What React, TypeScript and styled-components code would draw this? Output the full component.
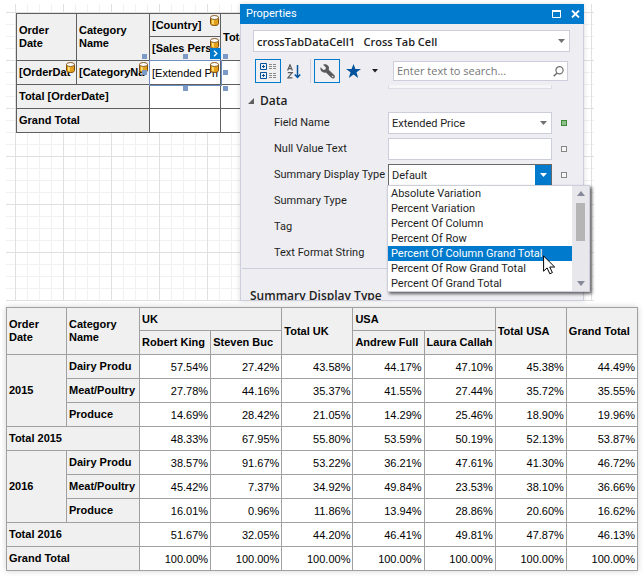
import React from 'react';
import styled, { createGlobalStyle, css } from 'styled-components';

const ui = "Roboto, 'Open Sans', sans-serif";
const uiBold = "'Open Sans', 'Noto Sans', sans-serif";
const report = "'Liberation Sans', Arial, sans-serif";
const blue = '#007acc';
const edge = '#cccedb';

const Global = createGlobalStyle`
  *, *::before, *::after { box-sizing: border-box; }
  body { margin: 0; background: #fff; color: #1e1e1e; font: 11px/13px ${report}; }
  button, input, select { font: inherit; color: inherit; margin: 0; }
`;

const Page = styled.main`
  display: flex;
  flex-direction: column;
  gap: 6px;
  padding: 4px 6px 8px;
`;

const Designer = styled.section`
  display: flex;
  margin-right: 44px;
  padding-right: 10px;
  background-color: #fff;
  background-image:
    linear-gradient(90deg, #e0e0e0 1px, transparent 1px),
    linear-gradient(#e0e0e0 1px, transparent 1px),
    linear-gradient(90deg, #f1f1f1 1px, transparent 1px),
    linear-gradient(#f1f1f1 1px, transparent 1px);
  background-size: 48px 48px, 48px 48px, 12px 12px, 12px 12px;
  background-position: 9px 8px;
`;

const Surface = styled.div`
  flex: 0 0 234px;
  overflow: hidden;
  padding: 9px 0 0 10px;
`;

const Grid = styled.table<{ $line: string }>`
  table-layout: fixed;
  border-collapse: collapse;
  width: 100%;
  color: #000;
  font: 11px/13px ${report};
  background: #fff;
  th, td { border: 1px solid ${p => p.$line}; }
`;

const DesignGrid = styled(Grid)`
  width: 275px;
`;

const Col = styled.col<{ $w?: number }>`
  ${p => p.$w && css`width: ${p.$w}px;`}
`;

const Row = styled.tr<{ $h?: number }>`
  height: ${p => p.$h ?? 24}px;
`;

const Head = styled.th`
  position: relative;
  padding: 0 0 0 2px;
  background: #f0f0f0;
  font-weight: bold;
  text-align: left;
  vertical-align: middle;
  white-space: nowrap;
`;

const Cell = styled.td<{ $left?: boolean }>`
  position: relative;
  padding: 2px 2px 0;
  text-align: ${p => (p.$left ? 'left' : 'right')};
  white-space: nowrap;
`;

const BoundMark = styled.svg`
  position: absolute;
  top: 1px;
  right: 1px;
  width: 9px;
  height: 11px;
`;

const Bound = () => (
  <BoundMark viewBox="0 0 9 11" aria-hidden="true">
    <path d="M.5 2.500v6c0 1.300 1.800 2 4 2s4-.7 4-2v-6z" fill="#e2a01c" stroke="#7c4a0a" />
    <path d="M2 4v4.500c.4.600 1 .8 1.800 1V4z" fill="#ffe07a" />
    <ellipse cx="4.500" cy="2.500" rx="4" ry="2" fill="#fdfdfd" stroke="#8a5d20" />
  </BoundMark>
);

const Selection = styled.div`
  position: absolute;
  inset: -1px -2px -2px -1px;
  border: 1px solid #6f8fc4;
`;

const Handle = styled.i<{ $x: number; $y: number }>`
  position: absolute;
  width: 5px;
  height: 5px;
  background: #7b9ac6;
  left: calc(${p => p.$x}% + ${p => (p.$x - 50) / 10 - 3}px);
  top: calc(${p => p.$y}% + ${p => (p.$y - 50) / 12 - 3}px);
`;

const SmartTag = styled.button`
  position: absolute;
  right: 0;
  bottom: 100%;
  width: 11px;
  height: 11px;
  padding: 0;
  border: 0;
  background: ${blue};
  display: grid;
  place-items: center;
  margin-bottom: 2px;
`;

const Panel = styled.aside`
  flex: 1;
  min-width: 0;
  height: 297px;
  display: flex;
  flex-direction: column;
  background: #eeeef2;
  border: 1px solid ${edge};
  border-top: 0;
  box-shadow: 0 0 5px rgba(0, 0, 0, 0.15);
  color: #1e1e1e;
  font: 11px/13px ${ui};
`;

const TitleBar = styled.header`
  display: flex;
  align-items: center;
  gap: 9px;
  height: 20px;
  margin: 0 -1px;
  padding: 0 4px 0 6px;
  background: ${blue};
  color: #fff;
`;

const Title = styled.h1`
  flex: 1;
  margin: 0;
  font: 11px/16px ${ui};
`;

const TitleButton = styled.button`
  width: 10px;
  height: 10px;
  padding: 0;
  border: 0;
  background: none;
  color: #fff;
  display: grid;
  place-items: center;
`;

const SelectBox = styled.label<{ $bold?: boolean; $open?: boolean }>`
  position: relative;
  display: flex;
  height: 22px;
  border: 1px solid ${p => (p.$open ? '#686868' : edge)};
  background: #fff;
  ${p => p.$bold && css`font: 600 11px/15px ${uiBold};`}
  color: #1e1e1e;
`;

const Select = styled.select`
  appearance: none;
  flex: 1;
  min-width: 0;
  padding: 0 18px 0 3px;
  border: 0;
  background: transparent;
  outline: 0;
`;

const Arrow = styled.span<{ $open?: boolean }>`
  position: absolute;
  inset: 0 0 0 auto;
  width: 16px;
  display: grid;
  place-items: center;
  pointer-events: none;
  background: ${p => (p.$open ? blue : 'transparent')};
  color: ${p => (p.$open ? '#fff' : '#717171')};
`;

const Down = () => (
  <svg width="7" height="4" viewBox="0 0 7 4" aria-hidden="true"><path d="M0 0h7L3.500 4z" fill="currentColor" /></svg>
);

const ObjectPicker = styled.div`
  padding: 6px 13px 0 12px;
`;

const Toolbar = styled.div`
  display: flex;
  align-items: center;
  height: 24px;
  margin: 7px 15px 0 14px;
`;

const Tool = styled.button<{ $on?: boolean; $w: number }>`
  flex: 0 0 ${p => p.$w}px;
  height: 24px;
  padding: 0;
  border: 1px solid ${p => (p.$on ? blue : 'transparent')};
  background: ${p => (p.$on ? '#f0f0f3' : 'transparent')};
  display: grid;
  place-items: center;
`;

const Rule = styled.span`
  width: 1px;
  height: 24px;
  margin: 0 3px 0 4px;
  background: ${edge};
`;

const Search = styled.label`
  display: flex;
  align-items: center;
  flex: 1;
  min-width: 0;
  height: 20px;
  margin-left: 9px;
  padding: 0 3px;
  border: 1px solid ${edge};
  background: #fff;
`;

const SearchInput = styled.input`
  flex: 1;
  min-width: 0;
  padding: 0;
  border: 0;
  outline: 0;
  background: none;
  font: 11px/16px ${uiBold};
  &::placeholder { color: #767676; opacity: 1; }
`;

const Properties = styled.div`
  display: grid;
  grid-template-columns: 147px 1fr 31px;
  row-gap: 4px;
  padding-top: 2px;
  & > :first-child { grid-column: 2; }
`;

const ScrolledField = styled.div`
  height: 4px;
  background: #f6f6f8;
  border: 1px solid #dcdde6;
  border-top: 0;
`;

const Group = styled.h2`
  grid-column: 1 / -1;
  display: flex;
  align-items: center;
  gap: 6px;
  height: 15px;
  margin: 0 0 0 7px;
  font: 600 12px/15px ${uiBold};
`;

const Name = styled.label`
  padding-left: 33px;
  line-height: 22px;
  height: 22px;
  white-space: nowrap;
`;

const TextBox = styled.input`
  width: 100%;
  min-width: 0;
  height: 22px;
  border: 1px solid ${edge};
  background: #fff;
  padding: 0 3px;
`;

const Marker = styled.span<{ $set?: boolean }>`
  align-self: center;
  width: 6px;
  height: 6px;
  margin-left: 9px;
  border: 1px solid ${p => (p.$set ? '#3f8a3a' : '#868686')};
  background: ${p => (p.$set ? '#8dc189' : '#f6f6f6')};
`;

const DropAnchor = styled.div`
  position: relative;
`;

const DropDown = styled.div`
  position: absolute;
  z-index: 2;
  top: 21px;
  left: -1px;
  width: 203px;
  display: flex;
  border: 1px solid ${edge};
  background: #fff;
  box-shadow: 2px 2px 3px rgba(0, 0, 0, 0.6);
`;

const Options = styled.ul`
  flex: 1;
  margin: 0;
  padding: 0;
  list-style: none;
`;

const Option = styled.li<{ $on?: boolean }>`
  height: 15px;
  padding-left: 3px;
  line-height: 15px;
  background: ${p => (p.$on ? blue : 'transparent')};
  color: ${p => (p.$on ? '#fff' : '#1e1e1e')};
  white-space: nowrap;
`;

const ScrollBar = styled.div`
  width: 17px;
  padding: 5px 4px;
  background: #e8e8ec;
  color: #868999;
  display: flex;
  flex-direction: column;
  align-items: center;
`;

const Thumb = styled.span`
  width: 9px;
  height: 38px;
  margin: 7px 0 auto;
  background: #b5b5b5;
`;

const Pointer = styled.svg`
  position: absolute;
  left: 155px;
  top: 69px;
  width: 13px;
  height: 20px;
`;

const Description = styled.footer`
  flex: 1;
  min-height: 0;
  overflow: hidden;
  margin: 4px 1px 0;
  padding: 18px 8px 0;
  border-top: 1px solid ${edge};
  font: 600 12px/17px ${uiBold};
`;

const ReportFrame = styled.section`
  box-shadow: 0 0 6px rgba(0, 0, 0, 0.18);
`;

const years = [
  {
    name: '2015',
    rows: [
      ['Dairy Produ', '57.54%', '27.42%', '43.58%', '44.17%', '47.10%', '45.38%', '44.49%'],
      ['Meat/Poultry', '27.78%', '44.16%', '35.37%', '41.55%', '27.44%', '35.72%', '35.55%'],
      ['Produce', '14.69%', '28.42%', '21.05%', '14.29%', '25.46%', '18.90%', '19.96%'],
    ],
    total: ['48.33%', '67.95%', '55.80%', '53.59%', '50.19%', '52.13%', '53.87%'],
  },
  {
    name: '2016',
    rows: [
      ['Dairy Produ', '38.57%', '91.67%', '53.22%', '36.21%', '47.61%', '41.30%', '46.72%'],
      ['Meat/Poultry', '45.42%', '7.37%', '34.92%', '49.84%', '23.53%', '38.10%', '36.66%'],
      ['Produce', '16.01%', '0.96%', '11.86%', '13.94%', '28.86%', '20.60%', '16.62%'],
    ],
    total: ['51.67%', '32.05%', '44.20%', '46.41%', '49.81%', '47.87%', '46.13%'],
  },
];

const displayTypes = [
  'Absolute Variation',
  'Percent Variation',
  'Percent Of Column',
  'Percent Of Row',
  'Percent Of Column Grand Total',
  'Percent Of Row Grand Total',
  'Percent Of Grand Total',
];

const DesignTable = () => (
  <DesignGrid $line="#5f5f5f">
    <colgroup><Col $w={60} /><Col $w={73} /><Col $w={71} /><Col /></colgroup>
    <tbody>
      <Row $h={23}>
        <Head rowSpan={2}>Order<br />Date</Head>
        <Head rowSpan={2}>Category<br />Name</Head>
        <Head>[Country]<Bound /></Head>
        <Head rowSpan={2}>Total</Head>
      </Row>
      <Row><Head>[Sales Pers<Bound /></Head></Row>
      <Row>
        <Head>[OrderDat<Bound /></Head>
        <Head>[CategoryNa<Bound /></Head>
        <Cell $left>
          [Extended Pri
          <Bound />
          <Selection>
            {[0, 50, 100].map(y => [0, 50, 100].map(x => (x === 50 && y === 50 ? null : <Handle key={`${x}-${y}`} $x={x} $y={y} />)))}
            <SmartTag aria-label="Cell tasks">
              <svg width="5" height="7" viewBox="0 0 5 7"><path d="M1 .8 3.800 3.500 1 6.200" fill="none" stroke="#fff" strokeWidth="1.400" /></svg>
            </SmartTag>
          </Selection>
        </Cell>
        <Cell />
      </Row>
      <Row><Head colSpan={2}>Total [OrderDate]</Head><Cell /><Cell /></Row>
      <Row><Head colSpan={2}>Grand Total</Head><Cell /><Cell /></Row>
    </tbody>
  </DesignGrid>
);

const PropertyPanel = () => (
  <Panel>
    <TitleBar>
      <Title>Properties</Title>
      <TitleButton aria-label="Maximize">
        <svg width="9" height="8" viewBox="0 0 9 8"><path d="M.5 1v6.500h8V1z" fill="none" stroke="#fff" /><path d="M0 0h9v2H0z" fill="#fff" /></svg>
      </TitleButton>
      <TitleButton aria-label="Close">
        <svg width="9" height="8" viewBox="0 0 9 8"><path d="m1 .5 7 7m0-7-7 7" stroke="#fff" strokeWidth="1.800" /></svg>
      </TitleButton>
    </TitleBar>
    <ObjectPicker>
      <SelectBox $bold>
        <Select aria-label="Object"><option>crossTabDataCell1{'\u00a0\u00a0\u00a0'}Cross Tab Cell</option></Select>
        <Arrow><Down /></Arrow>
      </SelectBox>
    </ObjectPicker>
    <Toolbar>
      <Tool $on $w={26} aria-label="Categorized">
        <svg width="16" height="16" viewBox="0 0 16 16" fill="none">
          <path d="M.5.500h6v6h-6zM.5 9.500h6v6h-6zM3.500 2v3M2 3.500h3M3.500 11v3M2 12.500h3" stroke="#00539c" />
          <path d="M9 1.500h3m1 0h3M9 3.500h3m1 0h3M9 5.500h3m1 0h3M9 10.500h3m1 0h3M9 12.500h3m1 0h3M9 14.500h3m1 0h3" stroke="#8a8a8a" />
        </svg>
      </Tool>
      <Tool $w={25} aria-label="Alphabetical">
        <svg width="14" height="15" viewBox="0 0 14 15" fill="none">
          <path d="M.6 6.500 3 .8l2.400 5.700M1.400 4.700h3.200M.8 8.600h4.400L.8 13.900h4.600" stroke="#5a5a5a" strokeWidth="1.200" />
          <path d="M10.500 1v12M7.800 10.500l2.700 2.900 2.700-2.900" stroke="#00539c" strokeWidth="1.500" />
        </svg>
      </Tool>
      <Rule />
      <Tool $on $w={26} aria-label="Property pages">
        <svg width="15" height="15" viewBox="0 0 15 15">
          <path d="M.6 3.200 3.400 5.900l2-.5.5-2L3.100.7c2-.9 4-.3 5.100 1.100.9 1.100 1 2.600.5 3.900l5.500 5.200c.9.900.9 2.200.1 3-.8.800-2.100.8-3-.1L5.900 8.400c-1.500.5-3 .2-4.100-.9C.6 6.400.1 4.700.6 3.200z" fill="#5a5a5a" />
          <circle cx="12.600" cy="12.500" r=".8" fill="#eee" />
        </svg>
      </Tool>
      <Tool $w={26} aria-label="Favorites">
        <svg width="15" height="14" viewBox="0 0 15 14"><path d="m7.500 0 1.900 5H15l-4.500 3.300 1.700 5.700-4.700-3.400L2.800 14l1.700-5.700L0 5h5.600z" fill="#00539c" /></svg>
      </Tool>
      <Tool $w={18} aria-label="More">
        <svg width="6" height="4" viewBox="0 0 6 4"><path d="M0 0h6L3 3.500z" fill="#1e1e1e" /></svg>
      </Tool>
      <Search>
        <SearchInput type="search" aria-label="Search properties" placeholder="Enter text to search..." />
        <svg width="11" height="11" viewBox="0 0 11 11" fill="none"><circle cx="6.500" cy="4.300" r="3.600" stroke="#717171" strokeWidth="1.200" /><path d="M4 7 .7 10.300" stroke="#717171" strokeWidth="1.600" /></svg>
      </Search>
    </Toolbar>
    <Properties>
      <ScrolledField />
      <Group>
        <svg width="6" height="6" viewBox="0 0 6 6" aria-hidden="true"><path d="M6 0v6H0z" fill="#5f5f5f" /></svg>
        Data
      </Group>
      <Name htmlFor="field">Field Name</Name>
      <SelectBox><Select id="field"><option>Extended Price</option></Select><Arrow><Down /></Arrow></SelectBox>
      <Marker $set />
      <Name htmlFor="nulltext">Null Value Text</Name>
      <TextBox id="nulltext" />
      <Marker />
      <Name htmlFor="display">Summary Display Type</Name>
      <DropAnchor>
        <SelectBox $open><Select id="display"><option>Default</option></Select><Arrow $open><Down /></Arrow></SelectBox>
        <DropDown>
          <Options role="listbox" aria-label="Summary Display Type">
            {displayTypes.map((t, i) => <Option key={t} role="option" aria-selected={i === 4} $on={i === 4}>{t}</Option>)}
          </Options>
          <ScrollBar>
            <svg width="8" height="5" viewBox="0 0 8 5"><path d="M4 0 8 5H0z" fill="currentColor" /></svg>
            <Thumb />
            <svg width="8" height="5" viewBox="0 0 8 5"><path d="M0 0h8L4 5z" fill="currentColor" /></svg>
          </ScrollBar>
          <Pointer viewBox="0 0 13 20"><path d="M.6 1v15.200l3.500-3.300 2.700 5.900 2.600-1.200-2.700-5.600h5z" fill="#fff" stroke="#000" /></Pointer>
        </DropDown>
      </DropAnchor>
      <Marker />
      <Name as="span">Summary Type</Name><span /><span />
      <Name as="span">Tag</Name><span /><span />
      <Name as="span">Text Format String</Name><span /><span />
    </Properties>
    <Description>Summary Display Type</Description>
  </Panel>
);

const Values = ({ items }: { items: string[] }) => <>{items.map((v, i) => <Cell key={i}>{v}</Cell>)}</>;

const ReportTable = () => (
  <ReportFrame>
    <Grid $line="#a0a0a0">
      <colgroup><Col $w={60} /><Col $w={73} /><Col span={7} /></colgroup>
      <thead>
        <Row $h={23}>
          <Head rowSpan={2}>Order<br />Date</Head>
          <Head rowSpan={2}>Category<br />Name</Head>
          <Head colSpan={2}>UK</Head>
          <Head rowSpan={2}>Total UK</Head>
          <Head colSpan={2}>USA</Head>
          <Head rowSpan={2}>Total USA</Head>
          <Head rowSpan={2}>Grand Total</Head>
        </Row>
        <Row><Head>Robert King</Head><Head>Steven Buc</Head><Head>Andrew Full</Head><Head>Laura Callah</Head></Row>
      </thead>
      <tbody>
        {years.map(y => (
          <React.Fragment key={y.name}>
            {y.rows.map((r, i) => (
              <Row key={r[0]}>
                {i === 0 && <Head rowSpan={3}>{y.name}</Head>}
                <Head>{r[0]}</Head>
                <Values items={r.slice(1)} />
              </Row>
            ))}
            <Row><Head colSpan={2}>Total {y.name}</Head><Values items={y.total} /></Row>
          </React.Fragment>
        ))}
        <Row><Head colSpan={2}>Grand Total</Head><Values items={Array(7).fill('100.00%')} /></Row>
      </tbody>
    </Grid>
  </ReportFrame>
);

export default function App() {
  return (
    <>
      <Global />
      <Page>
        <Designer>
          <Surface><DesignTable /></Surface>
          <PropertyPanel />
        </Designer>
        <ReportTable />
      </Page>
    </>
  );
}
